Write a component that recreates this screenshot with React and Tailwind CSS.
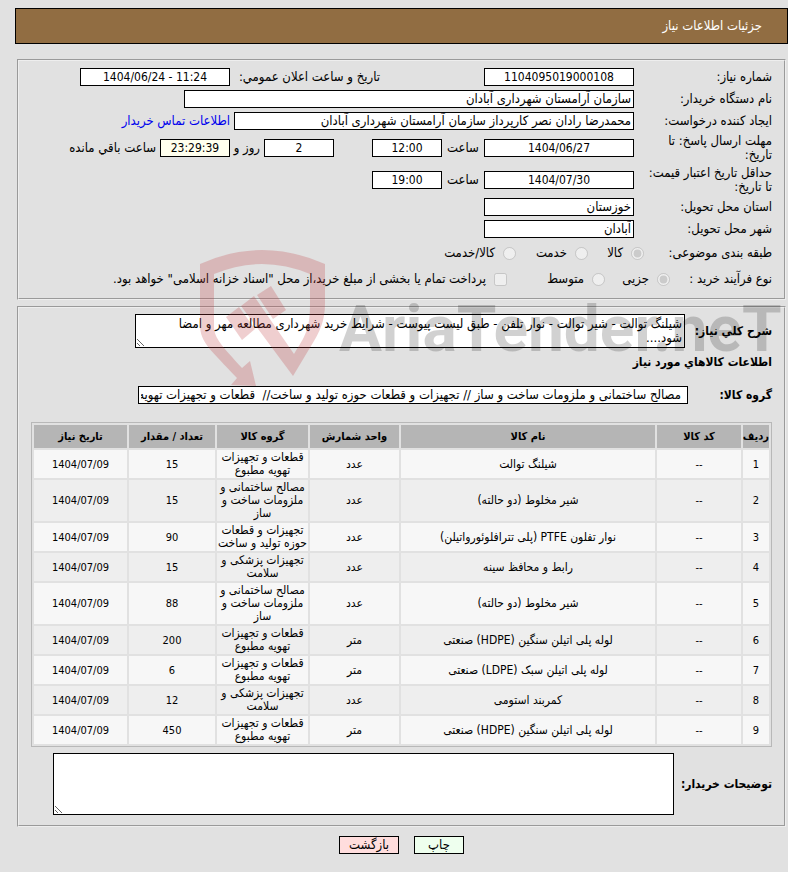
import React from 'react';

const items = [
  { name: 'شیلنگ توالت', unit: 'عدد', group: 'قطعات و تجهیزات تهویه مطبوع', qty: 15 },
  { name: 'شیر مخلوط (دو حالته)', unit: 'عدد', group: 'مصالح ساختمانی و ملزومات ساخت و ساز', qty: 15 },
  { name: 'نوار تفلون PTFE (پلی تترافلوئورواتیلن)', unit: 'عدد', group: 'تجهیزات و قطعات حوزه تولید و ساخت', qty: 90 },
  { name: 'رابط و محافظ سینه', unit: 'عدد', group: 'تجهیزات پزشکی و سلامت', qty: 15 },
  { name: 'شیر مخلوط (دو حالته)', unit: 'عدد', group: 'مصالح ساختمانی و ملزومات ساخت و ساز', qty: 88 },
  { name: 'لوله پلی اتیلن سنگین (HDPE) صنعتی', unit: 'متر', group: 'قطعات و تجهیزات تهویه مطبوع', qty: 200 },
  { name: 'لوله پلی اتیلن سبک (LDPE) صنعتی', unit: 'متر', group: 'قطعات و تجهیزات تهویه مطبوع', qty: 6 },
  { name: 'کمربند استومی', unit: 'عدد', group: 'تجهیزات پزشکی و سلامت', qty: 12 },
  { name: 'لوله پلی اتیلن سنگین (HDPE) صنعتی', unit: 'متر', group: 'قطعات و تجهیزات تهویه مطبوع', qty: 450 },
];

const Label = ({ id, children }) => (
  <label htmlFor={id} className="w-[138px] shrink-0 pl-3 leading-[14px]">
    {children}
  </label>
);

const Field = ({ id, value, label, className }) => (
  <input
    id={id}
    aria-label={label}
    readOnly
    defaultValue={value}
    className={`h-[18px] shrink-0 border border-black px-[2px] ${className}`}
  />
);

const Choice = ({ name, text, checked, className }) => (
  <label className={`flex shrink-0 items-center gap-2 ${className}`}>
    <input type="radio" name={name} disabled defaultChecked={checked} className="size-[13px]" />
    {text}
  </label>
);

const Watermark = () => (
  <div dir="ltr" className="pointer-events-none absolute top-[250px] right-0 flex w-[588px] items-start">
    <svg width="125" height="137" viewBox="0 0 125 137" className="shrink-0" fill="#be3c41" fillOpacity="0.25" aria-hidden="true">
      <path d="M0 14Q62 -14 125 14V54C125 70 120 82 111 96L93 126L41 56L54 46L94 104C105 86 110 80 110 54V24Q62 4 14 24V77C14 88 23 97 42 118L50 111L56 136L31 135L37 128C12 101 0 93 0 75Z" />
      <path d="M26 67L39 57L55 79L42 90Z" />
      <path d="M57 45L71 36L86 60L73 69Z" />
    </svg>
    <span className="mt-[35px] ml-[14px] font-['Roboto','Liberation_Sans',sans-serif] text-[64px] leading-[90px] font-bold whitespace-nowrap text-black/18">
      AriaTender.neT
    </span>
  </div>
);

const App = () => {
  return (
    <div
      dir="rtl"
      className="relative min-h-screen bg-[#e1e1e1] pt-2 pl-[15px] font-['DejaVu_Sans_Condensed','DejaVu_Sans',sans-serif] text-[13px] text-black"
    >
      <header className="flex h-9 items-center border border-black bg-[#916d42] px-[25px] text-white">
        <h1>جزئیات اطلاعات نیاز</h1>
      </header>

      <main className="mt-[15px] mr-[2px] ml-[2px]">
        <fieldset className="border-2 border-[#eee] px-3 pt-[5px] pb-[6px] [border-style:groove]">
          <div className="flex h-[22px] items-center">
            <Label id="number">شماره نیاز:</Label>
            <Field id="number" value="1104095019000108" className="w-[150px] bg-white text-center text-[12px]" />
            <label htmlFor="announced" className="mr-[104px] w-[150px] shrink-0 whitespace-nowrap">
              تاریخ و ساعت اعلان عمومي:
            </label>
            <input
              id="announced"
              dir="ltr"
              readOnly
              defaultValue="1404/06/24 - 11:24"
              className="h-[18px] w-[150px] shrink-0 border border-black bg-white text-center text-[12px]"
            />
          </div>
          <div className="flex h-[22px] items-center">
            <Label id="org">نام دستگاه خریدار:</Label>
            <Field id="org" value="سازمان آرامستان شهرداری آبادان" className="w-[450px] bg-white" />
          </div>
          <div className="flex h-[22px] items-center gap-1">
            <div className="flex items-center">
              <Label id="creator">ایجاد کننده درخواست:</Label>
              <Field
                id="creator"
                value="محمدرضا رادان نصر کارپرداز سازمان آرامستان شهرداری آبادان"
                className="w-[400px] bg-white"
              />
            </div>
            <a href="#contact" className="whitespace-nowrap text-[#0000ee]">اطلاعات تماس خریدار</a>
          </div>
          <div className="flex h-8 items-center">
            <Label id="deadline">مهلت ارسال پاسخ: تا تاریخ:</Label>
            <Field id="deadline" value="1404/06/27" className="w-[150px] bg-white text-center text-[12px]" />
            <label htmlFor="deadline-time" className="w-[42px] shrink-0 text-center">ساعت</label>
            <Field id="deadline-time" value="12:00" className="w-[70px] bg-white text-center text-[12px]" />
            <Field id="days" label="روز" value="2" className="mr-[38px] w-[70px] bg-white text-center text-[12px]" />
            <label htmlFor="days" className="w-[34px] shrink-0 pr-1">روز و</label>
            <Field id="left" value="23:29:39" className="w-[70px] bg-[#ffffee] text-center text-[12px]" />
            <label htmlFor="left" className="pr-1 whitespace-nowrap">ساعت باقي مانده</label>
          </div>
          <div className="flex h-8 items-center">
            <Label id="valid">حداقل تاریخ اعتبار قیمت: تا تاریخ:</Label>
            <Field id="valid" value="1404/07/30" className="w-[150px] bg-white text-center text-[12px]" />
            <label htmlFor="valid-time" className="w-[42px] shrink-0 text-center">ساعت</label>
            <Field id="valid-time" value="19:00" className="w-[70px] bg-white text-center text-[12px]" />
          </div>
          <div className="flex h-[22px] items-center">
            <Label id="province">استان محل تحویل:</Label>
            <Field id="province" value="خوزستان" className="w-[150px] bg-white" />
          </div>
          <div className="flex h-[22px] items-center">
            <Label id="city">شهر محل تحویل:</Label>
            <Field id="city" value="آبادان" className="w-[150px] bg-white" />
          </div>
          <div className="flex h-[26px] items-center">
            <span className="w-32 shrink-0">طبقه بندی موضوعی:</span>
            <Choice name="category" text="کالا" checked className="w-14" />
            <Choice name="category" text="خدمت" className="w-[72px]" />
            <Choice name="category" text="کالا/خدمت" />
          </div>
          <div className="flex h-[26px] items-center">
            <span className="w-[102px] shrink-0">نوع فرآیند خرید :</span>
            <Choice name="process" text="جزیی" checked className="w-[65px]" />
            <Choice name="process" text="متوسط" className="w-[98px]" />
            <label className="flex items-center gap-2 whitespace-nowrap">
              <input type="checkbox" disabled className="size-[13px]" />
              پرداخت تمام یا بخشی از مبلغ خرید،از محل "اسناد خزانه اسلامی" خواهد بود.
            </label>
          </div>
        </fieldset>

        <fieldset className="mt-[6px] border-2 border-[#eee] px-3 pt-[6px] pb-[10px] [border-style:groove]">
          <div className="flex items-center">
            <label htmlFor="summary" className="w-[87px] shrink-0 text-[12px] font-bold">شرح کلي نیاز:</label>
            <textarea
              id="summary"
              readOnly
              defaultValue="شیلنگ توالت - شیر توالت - نوار تلفن - طبق لیست پیوست - شرایط خرید شهرداری مطالعه مهر و امضا شود...."
              className="h-[34px] w-[550px] resize overflow-hidden border border-black bg-white pt-[2px] pr-[2px] pl-4 leading-[14px]"
            />
          </div>
          <h2 className="mt-1 text-[12px] leading-5 font-bold">اطلاعات کالاهاي مورد نیاز</h2>
          <div className="mt-[14px] flex items-center">
            <label htmlFor="group" className="w-[84px] shrink-0 text-[12px] font-bold">گروه کالا:</label>
            <input
              id="group"
              readOnly
              defaultValue="مصالح ساختمانی و ملزومات ساخت و ساز // تجهیزات و قطعات حوزه تولید و ساخت//  قطعات و تجهیزات تهویه مطبوع"
              className="h-[18px] w-[550px] border border-black bg-white pr-[6px] pl-[2px]"
            />
          </div>

          <table className="mt-[18px] w-full table-fixed border-separate border-spacing-[2px] border border-[#b8b8b8] text-center text-[11px] leading-[13px]">
            <colgroup>
              <col className="w-[26px]" />
              <col className="w-[84px]" />
              <col />
              <col className="w-[89px]" />
              <col className="w-[91px]" />
              <col className="w-[86px]" />
              <col className="w-[93px]" />
            </colgroup>
            <thead>
              <tr className="h-[23px] bg-[#b5b5b5] whitespace-nowrap">
                <th className="p-0">ردیف</th>
                <th className="p-0">کد کالا</th>
                <th className="p-0">نام کالا</th>
                <th className="p-0">واحد شمارش</th>
                <th className="p-0">گروه کالا</th>
                <th className="p-0">تعداد / مقدار</th>
                <th className="p-0">تاریخ نیاز</th>
              </tr>
            </thead>
            <tbody>
              {items.map((item, i) => (
                <tr key={i} className="odd:bg-[#f7f7f7] even:bg-[#eee]">
                  <td className="px-0 py-px">{i + 1}</td>
                  <td className="px-0 py-px">--</td>
                  <td className="px-0 py-px text-[12px] leading-[13px]">{item.name}</td>
                  <td className="px-0 py-px text-[12px] leading-[13px]">{item.unit}</td>
                  <td className="px-0 py-px text-[12px] leading-[13px]">{item.group}</td>
                  <td className="px-0 py-px">{item.qty}</td>
                  <td className="px-0 py-px">1404/07/09</td>
                </tr>
              ))}
            </tbody>
          </table>

          <div className="mt-[6px] flex items-center">
            <label htmlFor="notes" className="w-[98px] shrink-0 text-[12px] font-bold">توضیحات خریدار:</label>
            <textarea id="notes" readOnly className="h-[62px] w-[621px] resize border border-black bg-white" />
          </div>
        </fieldset>

        <div className="mt-[9px] flex justify-center gap-[15px]">
          <button className="h-[18px] w-[50px] border border-black bg-[#eeffee] leading-4">چاپ</button>
          <button className="h-[18px] w-[60px] border border-black bg-[#ffdddd] leading-4">بازگشت</button>
        </div>
      </main>

      <Watermark />
    </div>
  );
};

export default App;
